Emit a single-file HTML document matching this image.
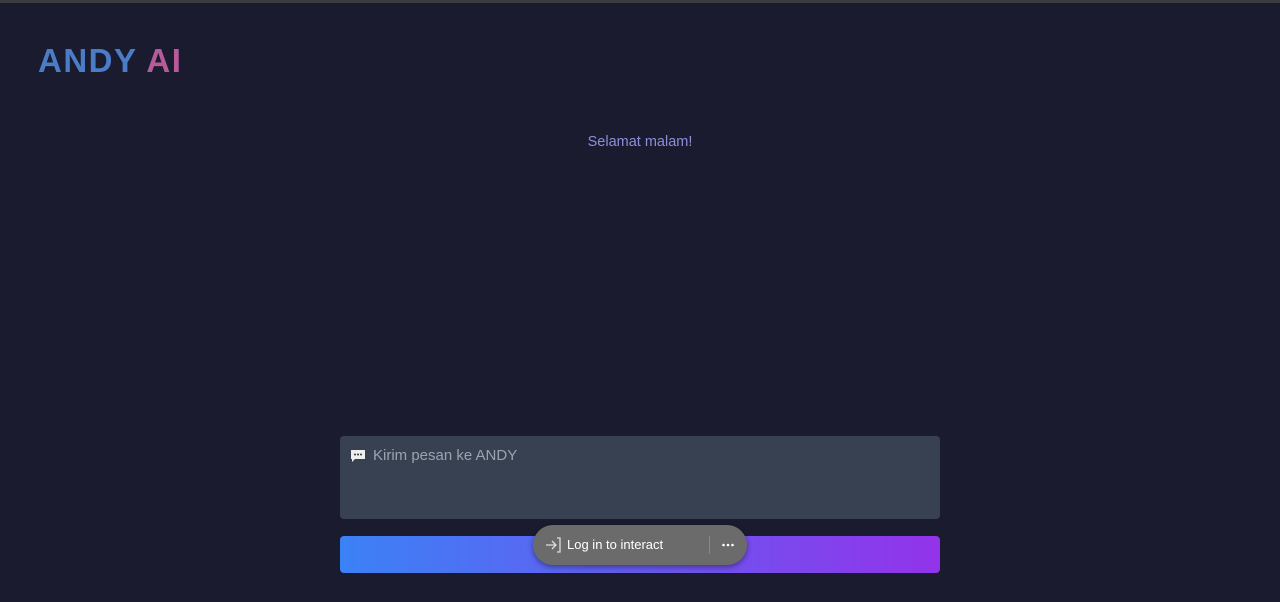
<!DOCTYPE html>
<html><head><meta charset="utf-8"><style>
html,body{margin:0;padding:0;width:1280px;height:602px;overflow:hidden;background:#1b1b2f;font-family:"Liberation Sans",sans-serif}
.top{position:absolute;left:0;top:0;width:1280px;height:3px;background:#3b3b40}
.logo{position:absolute;left:38px;top:42px;font-size:33px;font-weight:bold;letter-spacing:1.5px;color:#4a7cc8}
.logo span{color:#b75a9a}
.greet{position:absolute;left:0;width:1280px;top:134px;text-align:center;color:#8b8fd8;font-size:14.5px}
.box{position:absolute;left:340px;top:436px;width:600px;height:83px;background:#374151;border-radius:4px}
.ph{position:absolute;left:373px;top:447px;color:#9ca3af;font-size:15px}
.btn{position:absolute;left:340px;top:536px;width:600px;height:37px;border-radius:4px;background:linear-gradient(90deg,#3b82f6,#9333ea)}
.pill{position:absolute;left:533px;top:525px;width:214px;height:40px;border-radius:20px;background:#6b6b6b;box-shadow:0 2px 6px rgba(0,0,0,.4);color:#fff;font-size:13px}
.pill .t{position:absolute;left:34px;top:12px}
.pill .a{position:absolute;left:12px;top:11px}
.pill .sep{position:absolute;left:176px;top:11px;width:1px;height:18px;background:#888}
.pill .d{position:absolute;left:188px;top:18px}
</style></head><body>
<div class="top"></div>
<div class="logo">ANDY <span>AI</span></div>
<div class="greet">Selamat malam!</div>
<div class="box"></div>
<svg style="position:absolute;left:350px;top:449px" width="16" height="14" viewBox="0 0 16 14"><path d="M1 1h14v9H5l-3 3v-3H1z" fill="#eee"/><circle cx="5" cy="5.5" r="1" fill="#333"/><circle cx="8" cy="5.5" r="1" fill="#333"/><circle cx="11" cy="5.5" r="1" fill="#333"/></svg>
<div class="ph">Kirim pesan ke ANDY</div>
<div class="btn"></div>
<div class="pill">
<svg class="a" width="18" height="18" viewBox="0 0 18 18" fill="none" stroke="#ddd" stroke-width="1.3"><path d="M1 9h10M7 5l4 4-4 4M12 2h3v14h-3"/></svg>
<span class="t">Log in to interact</span><div class="sep"></div>
<svg class="d" width="14" height="4" viewBox="0 0 14 4" fill="#fff"><circle cx="2.5" cy="2" r="1.3"/><circle cx="7" cy="2" r="1.3"/><circle cx="11.5" cy="2" r="1.3"/></svg></div>
</body></html>
